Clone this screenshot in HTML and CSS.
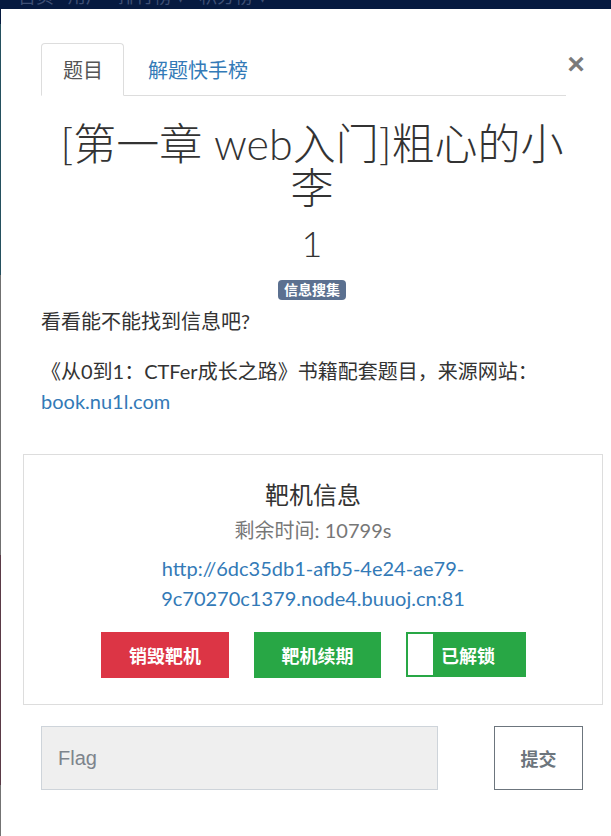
FILE: index.html
```html
<!DOCTYPE html>
<html lang="zh-CN">
<head>
<meta charset="utf-8">
<title>粗心的小李</title>
<link rel="stylesheet" href="styles.css">
</head>
<body>
<div class="topbar"><div class="topbar-text">首页 &nbsp; 用户 &nbsp; 排行榜 ▾ &nbsp; 积分榜 ▾</div></div>
<div class="modal">
  <div class="tabs-row">
    <ul class="tabs">
      <li class="tab active">题目</li>
      <li class="tab"><a href="#">解题快手榜</a></li>
    </ul>
    <button class="close" type="button">×</button>
  </div>
  <h1 class="title">[第一章 web入门]粗心的小李</h1>
  <div class="score">1</div>
  <div class="badge-row"><span class="badge">信息搜集</span></div>
  <p class="desc">看看能不能找到信息吧?</p>
  <p class="desc">《从0到1：CTFer成长之路》书籍配套题目，来源网站：<br><a href="#">book.nu1l.com</a></p>
  <div class="box">
    <h3 class="box-title">靶机信息</h3>
    <div class="remain">剩余时间: 10799s</div>
    <a class="url" href="#">http://6dc35db1-afb5-4e24-ae79-<br>9c70270c1379.node4.buuoj.cn:81</a>
    <div class="actions">
      <button class="btn btn-red" type="button">销毁靶机</button>
      <button class="btn btn-green" type="button">靶机续期</button>
      <div class="toggle"><span class="knob"></span><span class="toggle-label">已解锁</span></div>
    </div>
  </div>
  <div class="flag-row">
    <input class="flag" type="text" placeholder="Flag">
    <button class="submit" type="button">提交</button>
  </div>
</div>
</body>
</html>
```
FILE: styles.css
```css
html, body {
  margin: 0;
  padding: 0;
  height: 836px;
  overflow: hidden;
}
body {
  background: linear-gradient(to bottom,
    #061a40 0px, #061a40 24px,
    #24505e 24px, #24505e 275px,
    #707070 275px, #707070 555px,
    #5a3a46 555px, #5a3a46 785px,
    #737373 785px);
  font-family: Lato, "Noto Sans CJK SC", sans-serif;
  color: #333;
}
.topbar {
  height: 9px;
  overflow: hidden;
  background: #061a40;
}
.topbar-text {
  margin-top: -14px;
  margin-left: 18px;
  font-size: 18px;
  line-height: 20px;
  color: #3f5075;
  white-space: nowrap;
}
.modal {
  margin-left: 1px;
  background: #fff;
  height: 827px;
  padding: 34px 28px 0 40px;
  box-sizing: border-box;
}
.tabs-row {
  display: flex;
  align-items: flex-start;
}
.tabs {
  flex: 1;
  display: flex;
  list-style: none;
  margin: 0;
  padding: 0;
  border-bottom: 1px solid #ddd;
}
.tab {
  font-size: 20px;
  line-height: 28px;
  padding: 12px 20px 11px 21px;
  margin-bottom: -1px;
  margin-right: 2px;
  border: 1px solid transparent;
  border-radius: 4px 4px 0 0;
}
.tab.active {
  color: #555;
  border-color: #ddd;
  border-bottom-color: #fff;
  background: #fff;
}
.tab a {
  color: #337ab7;
  text-decoration: none;
}
.close {
  width: 20px;
  margin: 6px -3px 0 0;
  padding: 0;
  border: 0;
  background: none;
  font-family: "Liberation Sans", sans-serif;
  font-size: 30px;
  font-weight: bold;
  line-height: 30px;
  color: #7a7a7a;
}
.title {
  margin: 26px 0 0;
  text-align: center;
  font-size: 43px;
  font-weight: 300;
  line-height: 44px;
  color: #333;
  padding: 0 8px;
}
.score {
  margin-top: 13px;
  text-align: center;
  font-size: 36px;
  font-weight: 300;
  line-height: 40px;
}
.badge-row {
  margin-top: 16px;
  text-align: center;
  line-height: 20px;
}
.badge {
  display: inline-block;
  background: #5b7090;
  color: #fff;
  font-size: 14px;
  font-weight: bold;
  line-height: 20px;
  padding: 0 6px;
  border-radius: 4px;
}
.desc {
  margin: 6px 0 20px;
  font-size: 20px;
  line-height: 30px;
}
.desc a {
  color: #337ab7;
  text-decoration: none;
}
.box {
  margin: 38px -20px 0 -18px;
  border: 1px solid #ddd;
  padding: 27px 0 26px;
  text-align: center;
}
.box-title {
  margin: 0;
  font-size: 24px;
  font-weight: 400;
  line-height: 26px;
}
.remain {
  margin-top: 7px;
  font-size: 20px;
  line-height: 30px;
  color: #777;
}
.url {
  display: block;
  margin-top: 8px;
  font-size: 20px;
  line-height: 30px;
  color: #337ab7;
  text-decoration: none;
}
.actions {
  margin-top: 19px;
  display: flex;
  justify-content: center;
  align-items: flex-start;
  gap: 25px;
  padding-left: 1px;
}
.btn {
  height: 46px;
  border: 0;
  color: #fff;
  font-family: Lato, "Noto Sans CJK SC", sans-serif;
  font-size: 18px;
  font-weight: bold;
}
.btn-red {
  width: 128px;
  background: #dc3545;
}
.btn-green {
  width: 127px;
  background: #28a745;
}
.toggle {
  width: 120px;
  height: 45px;
  box-sizing: border-box;
  border: 1px solid #28a745;
  background: #28a745;
  display: flex;
  align-items: center;
}
.knob {
  width: 25px;
  align-self: stretch;
  margin: 1px 0 1px 1px;
  background: #fff;
}
.toggle-label {
  margin-left: 8px;
  color: #fff;
  font-size: 18px;
  font-weight: bold;
}
.flag-row {
  margin-top: 21px;
  display: flex;
  justify-content: space-between;
}
.flag {
  width: 397px;
  height: 64px;
  box-sizing: border-box;
  background: #efefef;
  border: 1px solid #ced4da;
  padding: 0 16px;
  font-family: "Liberation Sans", sans-serif;
  font-size: 20px;
  color: #495057;
}
.flag::placeholder {
  color: #7d848c;
}
.submit {
  width: 89px;
  height: 64px;
  background: #fff;
  border: 1px solid #6c757d;
  color: #6c757d;
  font-family: Lato, "Noto Sans CJK SC", sans-serif;
  font-size: 18px;
  font-weight: bold;
}
```
